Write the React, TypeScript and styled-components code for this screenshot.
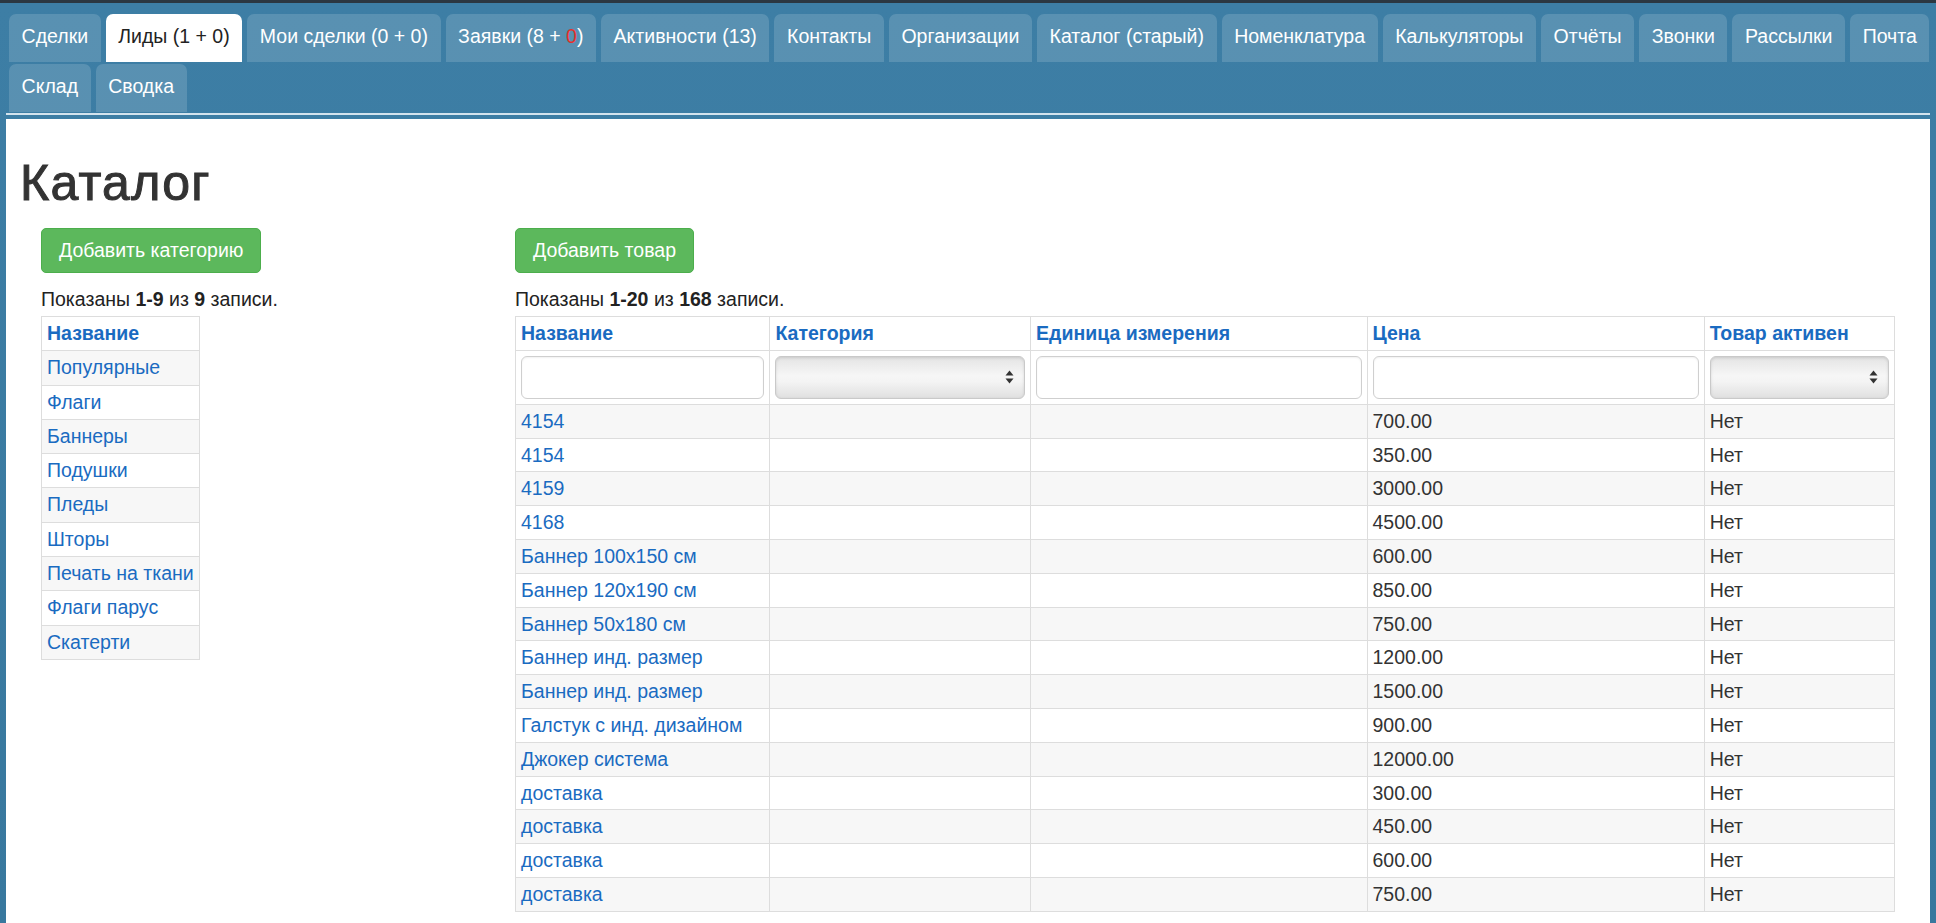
import styled, { createGlobalStyle } from "styled-components";

const GlobalStyle = createGlobalStyle`
  html, body {
    margin: 0;
    padding: 0;
    overflow: hidden;
  }
  body {
    background: #3a7aa0;
    font-family: "Liberation Sans", Arial, Helvetica, sans-serif;
    font-size: 19.5px;
    line-height: 27px;
    color: #333;
  }
`;

const Page = styled.div`
  min-height: 100vh;
  display: flex;
  flex-direction: column;
  box-sizing: border-box;
  border-top: 3px solid #2b3741;
  background: linear-gradient(180deg, #3d7ea5 0%, #38789e 100%);
`;

const Nav = styled.nav`
  display: flex;
  flex-direction: column;
  gap: 2px;
  padding: 11px 0 0 9px;
`;

const TabRow = styled.div`
  display: flex;
  gap: 5px;
`;

const Tab = styled.a<{ $active?: boolean }>`
  display: block;
  height: 48px;
  box-sizing: border-box;
  line-height: 44px;
  padding: 0 12.6px 4px;
  border-radius: 7px 7px 0 0;
  background: ${({ $active }) => ($active ? "#ffffff" : "rgba(255, 255, 255, 0.15)")};
  color: ${({ $active }) => ($active ? "#222" : "#fff")};
  white-space: nowrap;
  text-decoration: none;
  cursor: pointer;
`;

const Red = styled.span`
  color: #e8302a;
`;

const Divider = styled.div`
  height: 2px;
  margin: 1px 6px 0;
  background: #d3e3ed;
`;

const Panel = styled.main`
  flex: 1;
  margin: 4px 6px 0;
  padding: 37px 14px 0;
  background: #fff;
`;

const Title = styled.h1`
  margin: 0 0 17px;
  font-size: 50px;
  line-height: 55px;
  font-weight: 400;
  letter-spacing: 1.3px;
  color: #333;
  -webkit-text-stroke: 1px #333;
`;

const Columns = styled.div`
  display: grid;
  grid-template-columns: 1fr 3fr;
`;

const Column = styled.section`
  min-width: 0;
  padding: 0 21px;
`;

const ButtonBar = styled.div`
  display: flex;
`;

const GreenButton = styled.button`
  font-family: inherit;
  font-size: 19.5px;
  line-height: 27px;
  padding: 8px 17px;
  border: 1px solid #4cae4c;
  border-radius: 5px;
  background: #5cb85c;
  color: #fff;
  cursor: pointer;
`;

const Summary = styled.div`
  margin-top: 12px;
  line-height: 28px;
  color: #222;

  b {
    font-weight: 700;
  }
`;

const Table = styled.table<{ $fixed?: boolean }>`
  margin-top: 3px;
  border-collapse: collapse;
  border: 1px solid #ddd;
  table-layout: ${({ $fixed }) => ($fixed ? "fixed" : "auto")};
  width: ${({ $fixed }) => ($fixed ? "100%" : "auto")};

  th,
  td {
    border: 1px solid #ddd;
    padding: 3px 5px;
    text-align: left;
    line-height: ${({ $fixed }) => ($fixed ? "26.8px" : "27.3px")};
    white-space: nowrap;
  }

  th {
    font-weight: 700;
    color: #1a6bc1;
  }

  tbody tr:nth-child(odd) td {
    background: #f7f7f7;
  }
`;

const FilterCell = styled.td`
  && {
    padding: 5px;
  }
`;

const TextFilter = styled.input`
  display: block;
  box-sizing: border-box;
  width: 100%;
  height: 43px;
  border: 1px solid #cfcfcf;
  border-radius: 6px;
  background: #fff;
  box-shadow: inset 0 1px 2px rgba(0, 0, 0, 0.06);
  font-family: inherit;
  font-size: 19.5px;
`;

const SelectFilter = styled.div`
  display: flex;
  align-items: center;
  justify-content: flex-end;
  box-sizing: border-box;
  width: 100%;
  height: 43px;
  padding-right: 10px;
  border: 1px solid #c9c9c9;
  border-radius: 6px;
  background: linear-gradient(180deg, #e4e4e4 0%, #f6f6f6 45%, #f4f4f4 60%, #e0e0e0 100%);
  box-shadow: inset 0 1px 3px rgba(0, 0, 0, 0.12);
`;

const Link = styled.a`
  color: #1a6bc1;
  text-decoration: none;
`;

const Arrows = () => (
  <svg width="9" height="14" viewBox="0 0 9 14">
    <path d="M4.5 0.5 L8.5 5.5 H0.5 Z" fill="#333" />
    <path d="M4.5 13.5 L8.5 8.5 H0.5 Z" fill="#333" />
  </svg>
);

const firstRow = [
  "Сделки",
  "Лиды (1 + 0)",
  "Мои сделки (0 + 0)",
  "ZAYAVKI",
  "Активности (13)",
  "Контакты",
  "Организации",
  "Каталог (старый)",
  "Номенклатура",
  "Калькуляторы",
  "Отчёты",
  "Звонки",
  "Рассылки",
  "Почта",
];

const secondRow = ["Склад", "Сводка"];

const categories = [
  "Популярные",
  "Флаги",
  "Баннеры",
  "Подушки",
  "Пледы",
  "Шторы",
  "Печать на ткани",
  "Флаги парус",
  "Скатерти",
];

const products: [string, string][] = [
  ["4154", "700.00"],
  ["4154", "350.00"],
  ["4159", "3000.00"],
  ["4168", "4500.00"],
  ["Баннер 100x150 см", "600.00"],
  ["Баннер 120x190 см", "850.00"],
  ["Баннер 50x180 см", "750.00"],
  ["Баннер инд. размер", "1200.00"],
  ["Баннер инд. размер", "1500.00"],
  ["Галстук с инд. дизайном", "900.00"],
  ["Джокер система", "12000.00"],
  ["доставка", "300.00"],
  ["доставка", "450.00"],
  ["доставка", "600.00"],
  ["доставка", "750.00"],
];

export default function App() {
  return (
    <>
      <GlobalStyle />
      <Page>
        <Nav>
          <TabRow>
            {firstRow.map((t) =>
              t === "ZAYAVKI" ? (
                <Tab key={t}>
                  Заявки (8 + <Red>0</Red>)
                </Tab>
              ) : (
                <Tab key={t} $active={t === "Лиды (1 + 0)"}>
                  {t}
                </Tab>
              )
            )}
          </TabRow>
          <TabRow>
            {secondRow.map((t) => (
              <Tab key={t}>{t}</Tab>
            ))}
          </TabRow>
        </Nav>
        <Divider />
        <Panel>
          <Title>Каталог</Title>
          <Columns>
            <Column>
              <ButtonBar>
                <GreenButton>Добавить категорию</GreenButton>
              </ButtonBar>
              <Summary>
                Показаны <b>1-9</b> из <b>9</b> записи.
              </Summary>
              <Table>
                <thead>
                  <tr>
                    <th>Название</th>
                  </tr>
                </thead>
                <tbody>
                  {categories.map((c) => (
                    <tr key={c}>
                      <td>
                        <Link>{c}</Link>
                      </td>
                    </tr>
                  ))}
                </tbody>
              </Table>
            </Column>
            <Column>
              <ButtonBar>
                <GreenButton>Добавить товар</GreenButton>
              </ButtonBar>
              <Summary>
                Показаны <b>1-20</b> из <b>168</b> записи.
              </Summary>
              <Table $fixed>
                <colgroup>
                  <col style={{ width: "18.45%" }} />
                  <col style={{ width: "18.9%" }} />
                  <col style={{ width: "24.4%" }} />
                  <col style={{ width: "24.45%" }} />
                  <col style={{ width: "13.8%" }} />
                </colgroup>
                <thead>
                  <tr>
                    <th>Название</th>
                    <th>Категория</th>
                    <th>Единица измерения</th>
                    <th>Цена</th>
                    <th>Товар активен</th>
                  </tr>
                  <tr>
                    <FilterCell>
                      <TextFilter />
                    </FilterCell>
                    <FilterCell>
                      <SelectFilter>
                        <Arrows />
                      </SelectFilter>
                    </FilterCell>
                    <FilterCell>
                      <TextFilter />
                    </FilterCell>
                    <FilterCell>
                      <TextFilter />
                    </FilterCell>
                    <FilterCell>
                      <SelectFilter>
                        <Arrows />
                      </SelectFilter>
                    </FilterCell>
                  </tr>
                </thead>
                <tbody>
                  {products.map(([name, price], i) => (
                    <tr key={i}>
                      <td>
                        <Link>{name}</Link>
                      </td>
                      <td />
                      <td />
                      <td>{price}</td>
                      <td>Нет</td>
                    </tr>
                  ))}
                </tbody>
              </Table>
            </Column>
          </Columns>
        </Panel>
      </Page>
    </>
  );
}
